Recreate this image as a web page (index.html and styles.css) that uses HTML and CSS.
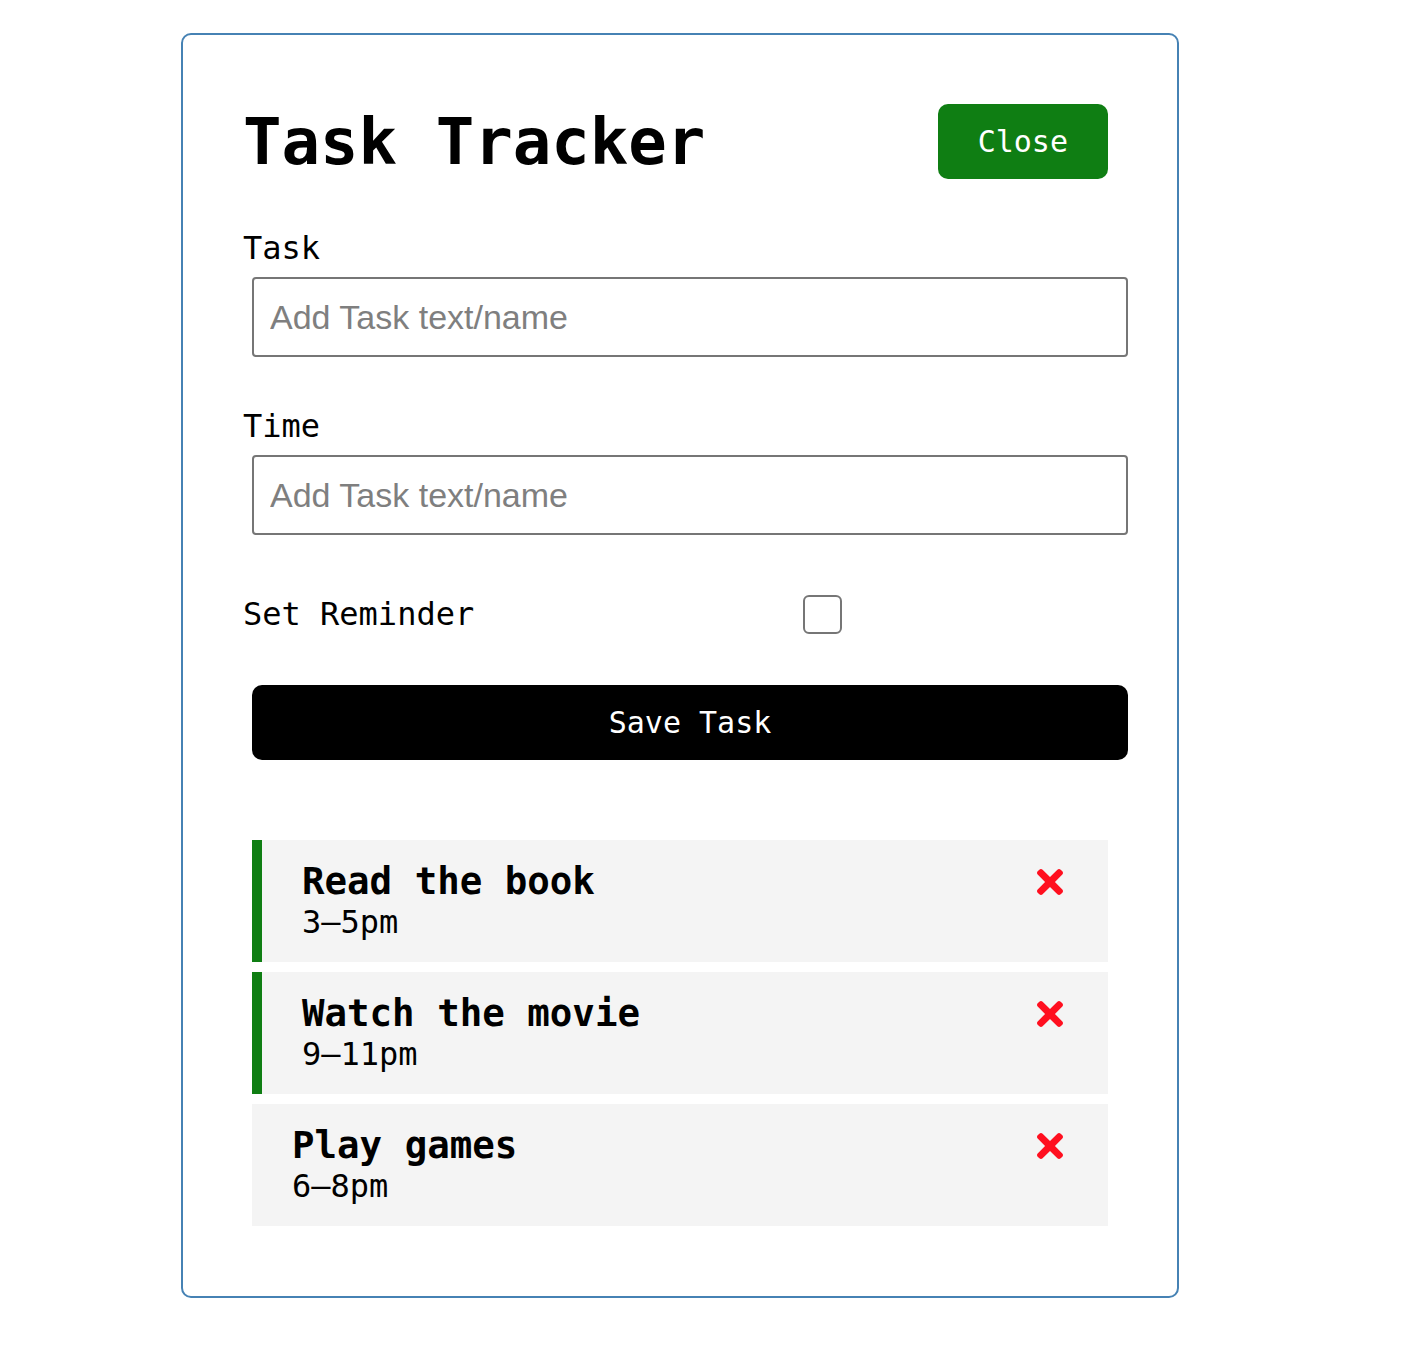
FILE: index.html
```html
<!DOCTYPE html>
<html lang="en">
<head>
<meta charset="utf-8">
<title>Task Tracker</title>
<link rel="stylesheet" href="styles.css">
</head>
<body>
<div class="container">
  <header class="header">
    <h1>Task Tracker</h1>
    <button class="btn btn-close">Close</button>
  </header>
  <form class="add-form">
    <div class="form-control">
      <label>Task</label>
      <input type="text" placeholder="Add Task text/name">
    </div>
    <div class="form-control">
      <label>Time</label>
      <input type="text" placeholder="Add Task text/name">
    </div>
    <div class="form-control form-control-check">
      <label>Set Reminder</label>
      <div class="check-wrap"><input type="checkbox" class="check"></div>
    </div>
    <button type="button" class="btn btn-block">Save Task</button>
  </form>
  <div class="tasks">
    <div class="task reminder">
      <h3>Read the book <svg class="del" viewBox="0 80 352 352"><path d="M242.72 256l100.07-100.07c12.28-12.28 12.28-32.19 0-44.48l-22.24-22.24c-12.28-12.28-32.19-12.28-44.48 0L176 189.28 75.930 89.21c-12.28-12.28-32.19-12.28-44.48 0L9.21 111.45c-12.28 12.280-12.28 32.19 0 44.48L109.28 256 9.21 356.07c-12.28 12.28-12.28 32.19 0 44.480l22.24 22.24c12.28 12.28 32.2 12.28 44.48 0L176 322.72l100.07 100.07c12.28 12.28 32.2 12.28 44.48 0l22.24-22.24c12.28-12.28 12.28-32.19 0-44.48L242.72 256z"/></svg></h3>
      <p>3–5pm</p>
    </div>
    <div class="task reminder">
      <h3>Watch the movie <svg class="del" viewBox="0 80 352 352"><path d="M242.72 256l100.07-100.07c12.28-12.28 12.28-32.19 0-44.48l-22.24-22.24c-12.28-12.28-32.19-12.28-44.48 0L176 189.28 75.930 89.21c-12.28-12.28-32.19-12.28-44.48 0L9.21 111.45c-12.28 12.280-12.28 32.19 0 44.48L109.28 256 9.21 356.07c-12.28 12.28-12.28 32.19 0 44.480l22.24 22.24c12.28 12.28 32.2 12.28 44.48 0L176 322.72l100.07 100.07c12.28 12.28 32.2 12.28 44.48 0l22.24-22.24c12.28-12.28 12.28-32.19 0-44.48L242.72 256z"/></svg></h3>
      <p>9–11pm</p>
    </div>
    <div class="task">
      <h3>Play games <svg class="del" viewBox="0 80 352 352"><path d="M242.72 256l100.07-100.07c12.28-12.28 12.28-32.19 0-44.48l-22.24-22.24c-12.28-12.28-32.19-12.28-44.48 0L176 189.28 75.930 89.21c-12.28-12.28-32.19-12.28-44.48 0L9.21 111.45c-12.28 12.280-12.28 32.19 0 44.48L109.28 256 9.21 356.07c-12.28 12.28-12.28 32.19 0 44.480l22.24 22.24c12.28 12.28 32.2 12.28 44.48 0L176 322.72l100.07 100.07c12.28 12.28 32.2 12.28 44.48 0l22.24-22.24c12.28-12.28 12.28-32.19 0-44.48L242.72 256z"/></svg></h3>
      <p>6–8pm</p>
    </div>
  </div>
</div>
</body>
</html>
```

FILE: styles.css
```css
* {
  box-sizing: border-box;
  margin: 0;
  padding: 0;
}

body {
  margin: 0;
  font-family: "DejaVu Sans Mono", "Liberation Mono", monospace;
  font-size: 32px;
  color: #000;
  background: #fff;
}

.container {
  width: 998px;
  margin: 33px 0 0 181px;
  padding: 60px;
  border: 2px solid steelblue;
  border-radius: 10px;
}

.header {
  display: flex;
  justify-content: space-between;
  align-items: center;
  margin-bottom: 40px;
}

.header h1 {
  font-size: 64px;
  font-weight: bold;
  line-height: 1.164;
}

.btn {
  display: inline-block;
  background: #000;
  color: #fff;
  border: none;
  padding: 20px 40px;
  margin: 10px;
  border-radius: 10px;
  font-family: "DejaVu Sans Mono", "Liberation Mono", monospace;
  font-size: 30px;
  line-height: 35px;
  cursor: pointer;
}

.btn-close {
  background: #0f7e13;
  margin: 9px 9px 11px 11px;
}

.btn-block {
  display: block;
  width: 876px;
  margin: 10px 0 10px 9px;
}

.add-form {
  margin-bottom: 80px;
}

.form-control {
  display: flow-root;
  margin: 40px 0 0;
  padding-bottom: 1px;
}

.form-control label {
  display: block;
  line-height: 1.164;
}

.form-control input[type="text"] {
  display: block;
  width: 876px;
  height: 80px;
  margin: 10px 0 10px 9px;
  padding: 6px 14px 6px 16px;
  font-family: "Liberation Sans", Arial, sans-serif;
  font-size: 34px;
  border: 2px solid #767676;
  border-radius: 4px;
  background: #fff;
}

.form-control input[type="text"]::placeholder {
  color: #7f7f7f;
}

.form-control-check {
  display: flex;
  align-items: center;
  justify-content: space-between;
  margin-top: 38px;
  margin-bottom: 41px;
  padding-bottom: 0;
}

.form-control-check label {
  flex: 1;
}

.check-wrap {
  flex: 2;
  margin: 10px;
  height: 40px;
  display: flex;
  justify-content: center;
  align-items: center;
}

.check {
  appearance: none;
  -webkit-appearance: none;
  width: 39px;
  height: 39px;
  border: 2px solid #767676;
  border-radius: 6px;
  background: #fff;
}

.task {
  background: #f4f4f4;
  margin: 10px 9px;
  padding: 20px 40px 21px;
}

.task.reminder {
  border-left: 10px solid #0f7e13;
}

.task h3 {
  display: flex;
  align-items: center;
  justify-content: space-between;
  font-size: 37.44px;
  font-weight: bold;
  line-height: 1.164;
}

.task p {
  font-size: 32px;
  line-height: 1.164;
}

.del {
  width: 26px;
  height: 26px;
  margin-right: 5px;
  fill: #ff0f1f;
}
```
